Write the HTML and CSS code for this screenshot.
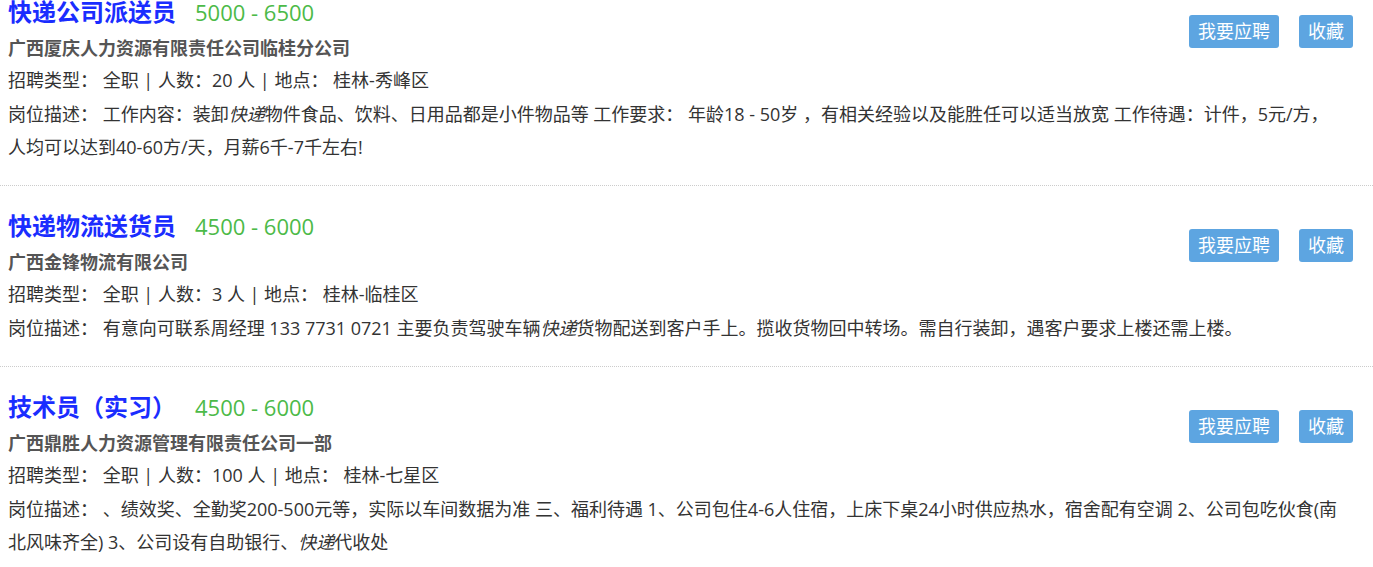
FILE: index.html
```html
<!DOCTYPE html>
<html lang="zh-CN">
<head>
  <meta charset="UTF-8" />
  <meta name="viewport" content="width=device-width, initial-scale=1.0"/>
  <title>招聘信息</title>
  <link rel="stylesheet" href="styles.css">
</head>
<body>

  <div class="job-list">

    <div class="job">
      <div class="job-main">
        <div class="job-title"><a href="#">快递公司派送员</a><span class="salary">5000 - 6500</span></div>
        <div class="company">广西厦庆人力资源有限责任公司临桂分公司</div>
        <div class="info">招聘类型： 全职 | 人数：20 人 | 地点： 桂林-秀峰区</div>
        <div class="desc">岗位描述： 工作内容：装卸<em>快递</em>物件食品、饮料、日用品都是小件物品等 工作要求： 年龄18 - 50岁 ，有相关经验以及能胜任可以适当放宽 工作待遇：计件，5元/方，人均可以达到40-60方/天，月薪6千-7千左右!</div>
      </div>
      <div class="job-actions">
        <button class="btn">我要应聘</button>
        <button class="btn">收藏</button>
      </div>
    </div>

    <div class="job">
      <div class="job-main">
        <div class="job-title"><a href="#">快递物流送货员</a><span class="salary">4500 - 6000</span></div>
        <div class="company">广西金锋物流有限公司</div>
        <div class="info">招聘类型： 全职 | 人数：3 人 | 地点： 桂林-临桂区</div>
        <div class="desc">岗位描述： 有意向可联系周经理 133 7731 0721 主要负责驾驶车辆<em>快递</em>货物配送到客户手上。揽收货物回中转场。需自行装卸，遇客户要求上楼还需上楼。</div>
      </div>
      <div class="job-actions">
        <button class="btn">我要应聘</button>
        <button class="btn">收藏</button>
      </div>
    </div>

    <div class="job">
      <div class="job-main">
        <div class="job-title"><a href="#">技术员（实习）</a><span class="salary">4500 - 6000</span></div>
        <div class="company">广西鼎胜人力资源管理有限责任公司一部</div>
        <div class="info">招聘类型： 全职 | 人数：100 人 | 地点： 桂林-七星区</div>
        <div class="desc">岗位描述： 、绩效奖、全勤奖200-500元等，实际以车间数据为准 三、福利待遇 1、公司包住4-6人住宿，上床下桌24小时供应热水，宿舍配有空调 2、公司包吃伙食(南北风味齐全) 3、公司设有自助银行、<em>快递</em>代收处</div>
      </div>
      <div class="job-actions">
        <button class="btn">我要应聘</button>
        <button class="btn">收藏</button>
      </div>
    </div>

  </div>

</body>
</html>
```

FILE: styles.css
```css
* {
  box-sizing: border-box;
  margin: 0;
  padding: 0;
}

body {
  font-family: "Open Sans", "Noto Sans CJK SC", sans-serif;
  background-color: #fff;
  color: #333;
  overflow: hidden;
}

/* LISTA */
.job-list {
  margin-top: -28px;
}

.job {
  display: flex;
  align-items: flex-start;
  padding: 24px 20px 21px 8px;
  border-bottom: 1px dotted #ccc;
}

.job-main {
  flex: 1;
  min-width: 0;
}

.job-title {
  line-height: 32px;
  margin-bottom: 1px;
  white-space: nowrap;
}

.job-title a {
  font-size: 24px;
  font-weight: bold;
  color: #1a2dff;
  text-decoration: none;
}

.salary {
  font-size: 22px;
  color: #4cba48;
  margin-left: 19px;
}

.company {
  font-size: 18px;
  font-weight: bold;
  color: #555;
  line-height: 32px;
}

.info {
  font-size: 18px;
  line-height: 32px;
}

.desc {
  font-size: 18px;
  line-height: 33px;
  margin-top: 2px;
  margin-right: -152px;
}

.desc em {
  font-style: italic;
}

/* BOTOES */
.job-actions {
  display: flex;
  gap: 20px;
  margin-top: 19px;
  position: relative;
  z-index: 1;
}

.btn {
  height: 33px;
  line-height: 33px;
  padding: 0 9px;
  font-size: 18px;
  font-family: inherit;
  color: #fff;
  background-color: #5da5e1;
  border: none;
  border-radius: 3px;
  cursor: pointer;
}
```
